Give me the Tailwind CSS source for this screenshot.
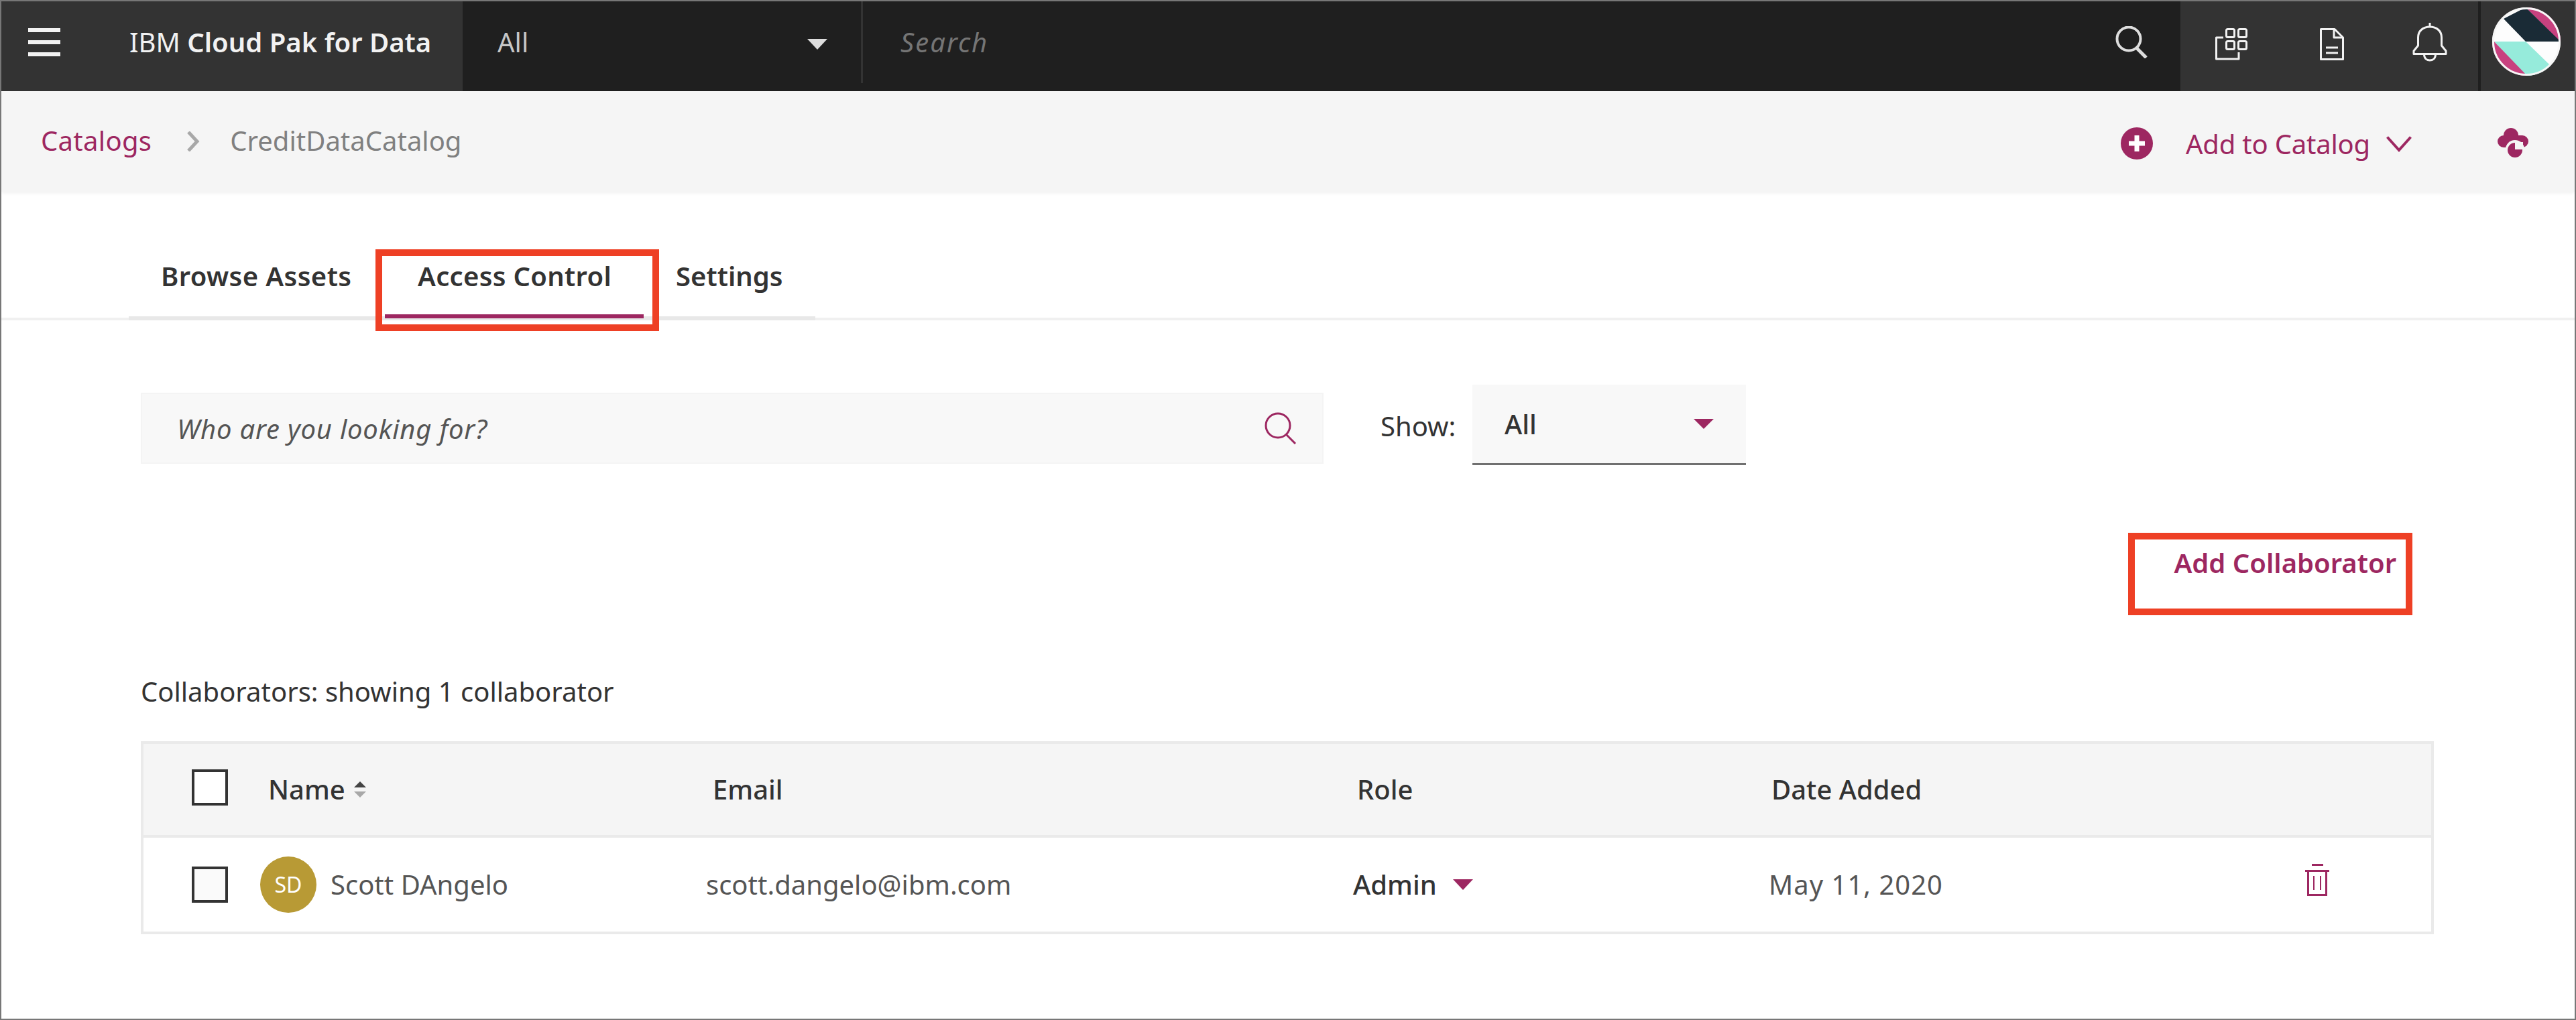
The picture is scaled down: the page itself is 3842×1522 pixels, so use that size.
<!DOCTYPE html>
<html lang="en">
<head>
    <meta charset="UTF-8">
    <title>CreditDataCatalog - Access Control</title>
    <script src="https://cdn.jsdelivr.net/npm/@tailwindcss/browser@4"></script>
</head>
<body class="bg-white">
<div class="relative w-[3842px] h-[1522px] border-2 border-[#777777] overflow-hidden bg-white font-['Noto_Sans',sans-serif] text-[40px] leading-[52px] text-[#333333]">

    <!-- Top nav -->
    <header class="flex h-[134px]">
        <div class="flex w-[688px] items-center bg-[#333333] pb-[12px]">
            <div class="ml-[40px] flex w-[48px] flex-col gap-[12px]">
                <span class="h-[6px] bg-[#f2f2f2]"></span>
                <span class="h-[6px] bg-[#f2f2f2]"></span>
                <span class="h-[6px] bg-[#f2f2f2]"></span>
            </div>
            <div class="ml-[103px] whitespace-nowrap text-[#f2f2f2]">IBM <span class="font-semibold">Cloud Pak for Data</span></div>
        </div>
        <div class="flex flex-1 items-center bg-[#1f1f1f] pb-[12px]">
            <div class="flex h-[122px] w-[597px] items-center justify-between border-r-[3px] border-[#333333] pl-[52px] pr-[50px] text-[#c6c6c6]">
                <span>All</span>
                <svg width="30" height="16" viewBox="0 0 30 16" class="mt-[6px]"><path d="M0 0H30L15 16Z" fill="#dddddd"/></svg>
            </div>
            <div class="flex-1 pl-[56px] italic tracking-[2px] text-[#757575]">Search</div>
            <svg width="48" height="48" viewBox="0 0 48 48" fill="none" stroke="#dddddd" class="mr-[49px]">
                <circle cx="20" cy="19" r="17.5" stroke-width="4"/>
                <path d="M32 33L46 47" stroke-width="5"/>
            </svg>
        </div>
        <div class="flex w-[588px] items-start bg-[#333333]">
            <svg width="48" height="48" viewBox="0 0 48 48" fill="none" stroke="#f2f2f2" stroke-width="3" stroke-linejoin="round" class="ml-[52px] mt-[40px]">
                <rect x="16.500" y="1.500" width="12" height="12" rx="2"/>
                <rect x="34.500" y="1.500" width="12" height="12" rx="2"/>
                <rect x="16.500" y="19.500" width="12" height="12" rx="2"/>
                <rect x="34.500" y="19.500" width="12" height="12" rx="2"/>
                <path d="M12 14H1.500V46H35V36"/>
            </svg>
            <svg width="36" height="48" viewBox="0 0 36 48" fill="none" stroke="#f2f2f2" stroke-width="3" stroke-linejoin="round" class="ml-[108px] mt-[40px]">
                <path d="M1.500 1.500H22L34.500 14V46.500H1.500Z"/>
                <path d="M21 1.500V14H34.500"/>
                <path d="M9 29H27M9 37H27"/>
            </svg>
            <svg width="52" height="58" viewBox="0 0 52 58" fill="none" stroke="#f2f2f2" stroke-width="3" stroke-linejoin="round" class="ml-[102px] mt-[32px]">
                <path d="M26 0V6"/>
                <path d="M8.500 34V22C8.500 12 16 6 26 6C36 6 43.500 12 43.500 22V34L50 42V46.500H2V42Z"/>
                <path d="M17.500 47C17.500 53 21 56 26 56C31 56 34.500 53 34.500 47"/>
            </svg>
            <span class="ml-[46px] h-full w-[4px] bg-[#1f1f1f]"></span>
            <svg width="102" height="102" viewBox="0 0 102 102" class="ml-[17px] mt-[9px]">
                <clipPath id="avatar-clip"><circle cx="51" cy="51" r="51"/></clipPath>
                <g clip-path="url(#avatar-clip)">
                    <rect width="102" height="102" fill="#fdfdfd"/>
                    <path d="M50 0H102V52Z" fill="#c8417f"/>
                    <path d="M17 17L50 0L102 51H50Z" fill="#1a2b36"/>
                    <path d="M3 51H50L85 85L102 102H50Z" fill="#96ebdb"/>
                    <path d="M0 48L52 102H0Z" fill="#c8417f"/>
                </g>
                <circle cx="51" cy="51" r="49.500" fill="none" stroke="#f7f7f7" stroke-width="3"/>
            </svg>
        </div>
    </header>

    <!-- Breadcrumb bar -->
    <div class="relative flex h-[150px] items-center bg-[#f5f5f5] pl-[59px] shadow-[0_2px_5px_rgba(0,0,0,0.06)]">
        <span class="-mt-[2px] tracking-[0.3px] text-[#9d2761]">Catalogs</span>
        <svg width="20" height="30" viewBox="0 0 20 30" fill="none" stroke="#a8a8a8" stroke-width="5" class="ml-[52px]"><path d="M3 1L16 15L3 29"/></svg>
        <span class="-mt-[2px] ml-[45px] text-[#808080]">CreditDataCatalog</span>
        <div class="ml-auto flex items-center text-[#9d2761]">
            <svg width="48" height="48" viewBox="0 0 48 48" class="mt-[6px]">
                <circle cx="24" cy="24" r="24" fill="#9d2761"/>
                <path d="M12 20.500H20.500V12H27.500V20.500H36V27.500H27.500V36H20.500V27.500H12Z" fill="#ffffff"/>
            </svg>
            <span class="ml-[49px] mt-[8px] tracking-[-0.2px]">Add to Catalog</span>
            <svg width="38" height="24" viewBox="0 0 38 24" fill="none" stroke="#9d2761" stroke-width="4" class="ml-[24px] mt-[8px]"><path d="M1.500 1.500L19 21L36.500 1.500"/></svg>
            <svg width="46" height="46" viewBox="14 6 46 46" class="ml-[128px] mr-[69px] mt-[6px]">
                <circle cx="34" cy="17" r="11" fill="#9d2761"/>
                <circle cx="23" cy="26" r="9" fill="#9d2761"/>
                <circle cx="51" cy="26" r="9" fill="#9d2761"/>
                <rect x="23" y="17" width="28" height="18" fill="#9d2761"/>
                <circle cx="40" cy="38" r="14" fill="#f5f5f5"/>
                <circle cx="40" cy="39" r="11" fill="#9d2761"/>
                <rect x="40" y="27" width="12" height="11" fill="#f5f5f5"/>
            </svg>
        </div>
    </div>

    <!-- Tabs -->
    <div class="h-[192px] border-b-4 border-[#f0f0f0]">
        <nav class="ml-[190px] -mb-[4px] flex h-[192px] w-[1024px] border-b-[6px] border-[#e8e8e8] font-semibold">
            <div class="w-[382px] pl-[48px] pt-[100px] tracking-[0.4px]">Browse Assets</div>
            <div class="-mb-[3px] w-[386px] border-b-[6px] border-[#9d2761] pl-[49px] pt-[100px] tracking-[0.3px]">Access Control</div>
            <div class="w-[256px] pl-[48px] pt-[100px]">Settings</div>
        </nav>
    </div>

    <!-- Content -->
    <main class="pl-[208px] pr-[210px]">
        <div class="mt-[96px] flex items-start">
            <div class="mt-[12px] flex h-[106px] w-[1764px] items-center justify-between border-2 border-[#f4f4f4] bg-[#f8f8f8] pl-[52px] pr-[38px] italic text-[#555555]">
                <span class="mt-[2px] tracking-[0.8px]">Who are you looking for?</span>
                <svg width="48" height="48" viewBox="0 0 48 48" fill="none" stroke="#9d2761" stroke-width="3">
                    <circle cx="20" cy="20" r="18"/>
                    <path d="M32 33L46 47"/>
                </svg>
            </div>
            <span class="ml-[85px] mt-[36px] w-[137px]">Show:</span>
            <div class="flex h-[120px] w-[408px] items-center justify-between border-b-[3px] border-[#707070] bg-[#f8f8f8] pl-[48px] pr-[48px] font-medium">
                <span>All</span>
                <svg width="30" height="15" viewBox="0 0 30 15"><path d="M0 0H30L15 15Z" fill="#9d2761"/></svg>
            </div>
        </div>

        <div class="mt-[120px] flex justify-end pr-[56px] font-semibold text-[#9d2761]">Add Collaborator</div>

        <p class="mt-[140px]">Collaborators: showing 1 collaborator</p>

        <section class="mt-[48px] border-4 border-[#eaeaea]">
            <div class="grid h-[140px] grid-cols-[186px_663px_961px_618px_1fr] items-center border-b-4 border-[#eaeaea] bg-[#f5f5f5] font-medium">
                <div class="-mt-[6px] pl-[72px]"><span class="block h-[54px] w-[54px] border-4 border-[#333333] bg-white"></span></div>
                <div class="flex items-center">Name
                    <svg width="18" height="24" viewBox="0 0 18 24" class="ml-[13px]">
                        <path d="M9 0L18 9H0Z" fill="#444444"/>
                        <path d="M0 15H18L9 24Z" fill="#a8a8a8"/>
                    </svg>
                </div>
                <div>Email</div>
                <div>Role</div>
                <div>Date Added</div>
            </div>
            <div class="grid h-[140px] grid-cols-[174px_665px_965px_620px_800px_1fr] items-center text-[#555555]">
                <div class="pl-[72px]"><span class="block h-[54px] w-[54px] border-4 border-[#333333] bg-[#fafafa]"></span></div>
                <div class="flex items-center">
                    <span class="flex h-[84px] w-[84px] items-center justify-center rounded-full bg-[#b89a35] text-[32px] text-white">SD</span>
                    <span class="ml-[21px]">Scott DAngelo</span>
                </div>
                <div>scott.dangelo@ibm.com</div>
                <div class="flex items-center font-medium text-[#333333]">Admin
                    <svg width="30" height="16" viewBox="0 0 30 16" class="ml-[24px]"><path d="M0 0H30L15 16Z" fill="#9d2761"/></svg>
                </div>
                <div class="tracking-[1px]">May 11, 2020</div>
                <svg width="36" height="48" viewBox="0 0 36 48" fill="none" stroke="#9d2761" class="-mt-[14px]">
                    <path d="M10 1.500H27" stroke-width="3"/>
                    <path d="M0 10.500H36" stroke-width="3"/>
                    <path d="M4.500 10V46.500H31.500V10" stroke-width="3"/>
                    <path d="M13 18V39M23 18V39" stroke-width="2"/>
                </svg>
            </div>
        </section>
    </main>

    <!-- Annotation boxes -->
    <div class="absolute left-[558px] top-[370px] h-[122px] w-[423px] border-[10px] border-[#ee4025]"></div>
    <div class="absolute left-[3172px] top-[793px] h-[123px] w-[424px] border-[10px] border-[#ee4025]"></div>
</div>
</body>
</html>
